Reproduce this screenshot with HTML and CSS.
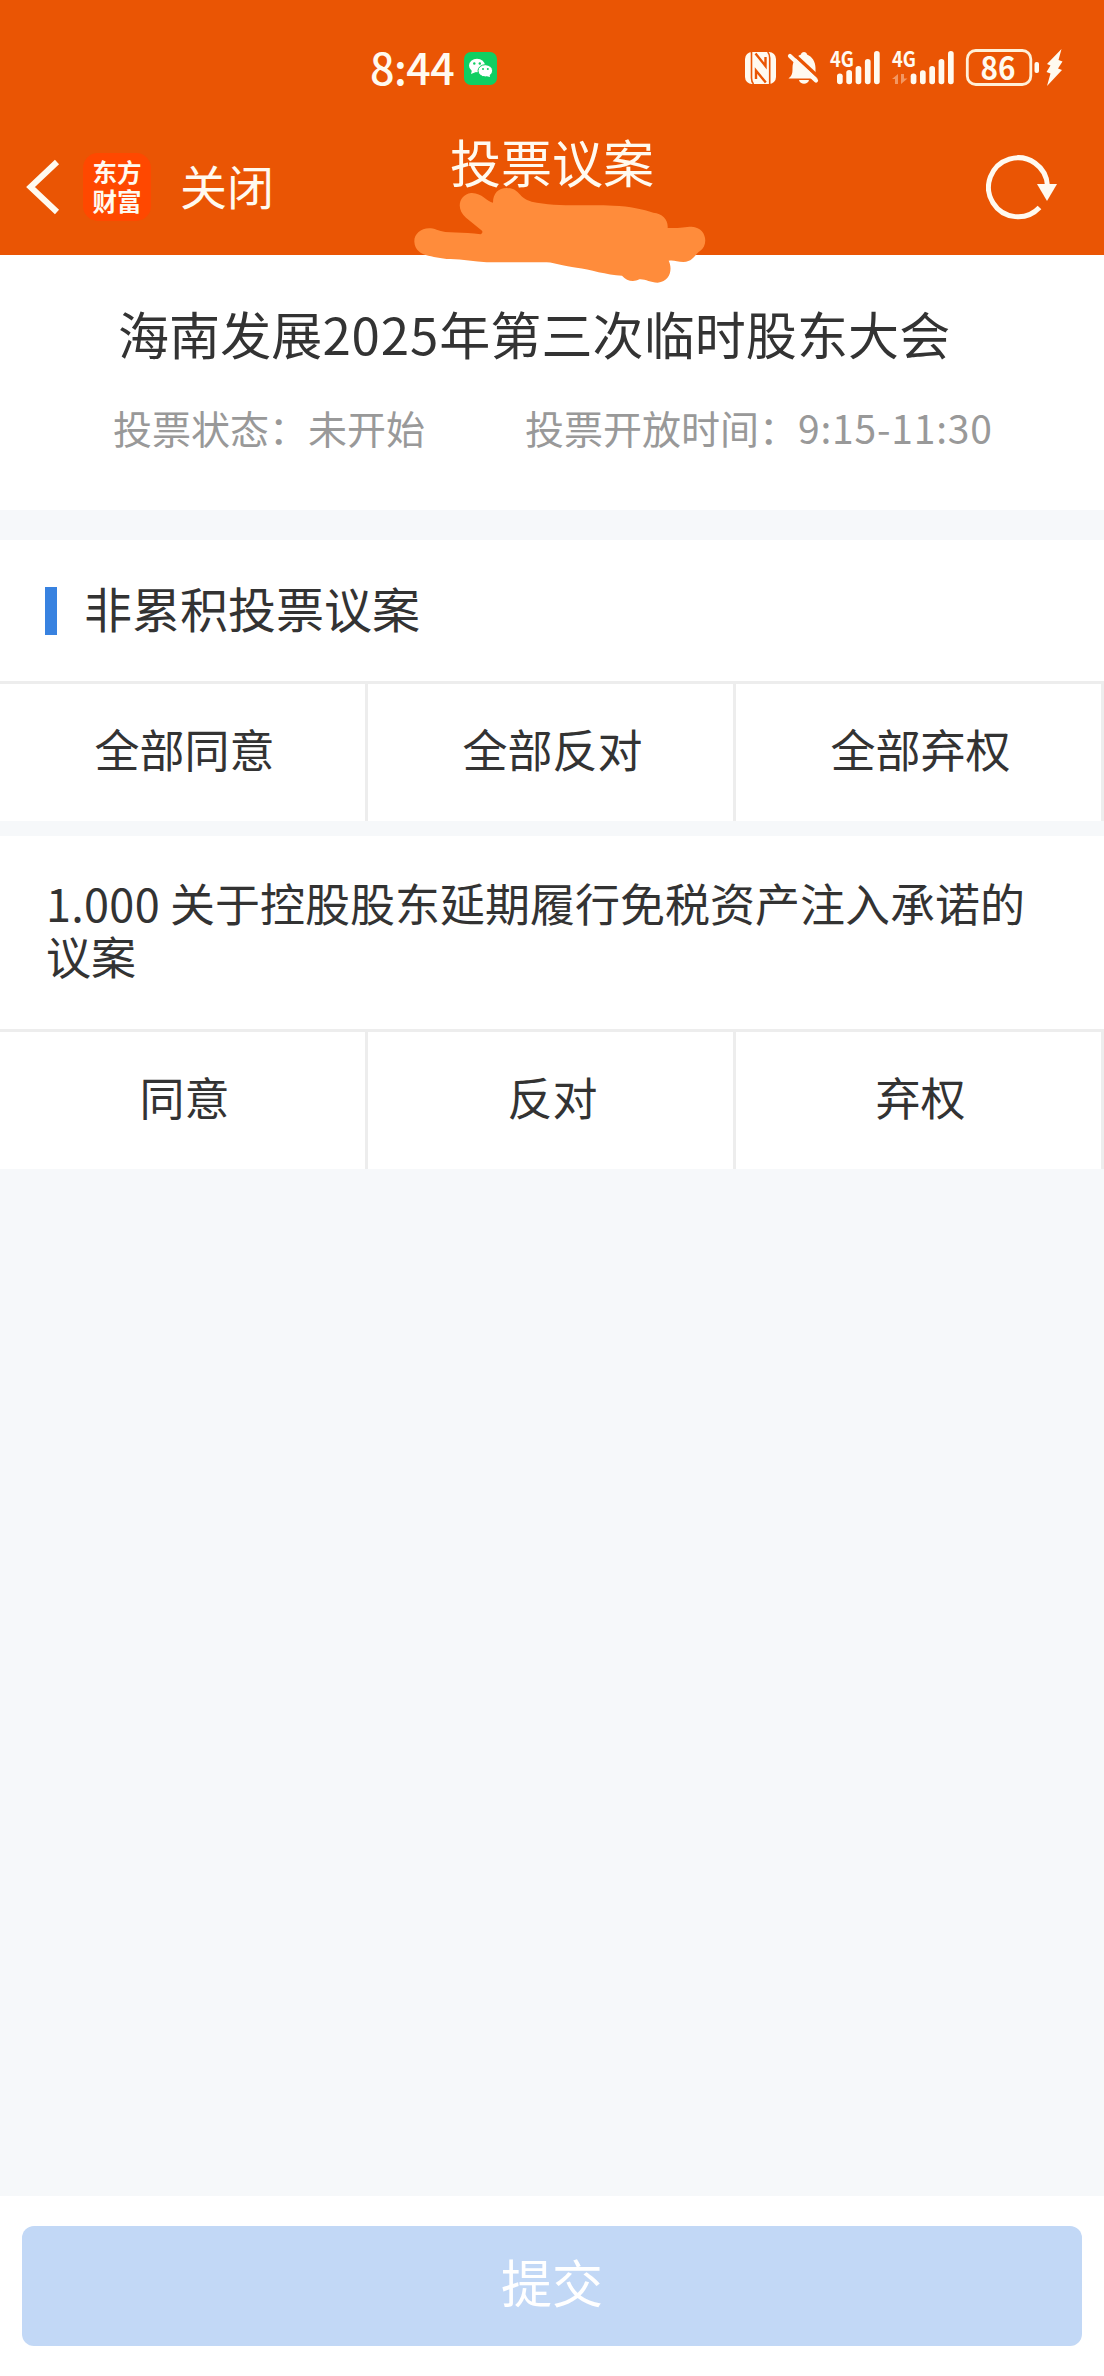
FILE: index.html
```html
<!DOCTYPE html>
<html lang="zh-CN">
<head>
<meta charset="utf-8">
<title>投票议案</title>
<link rel="stylesheet" href="styles.css">
</head>
<body>
<header class="header">
  <div class="status">
    <div class="status-left">
      <span class="time">8:44</span>
      <svg class="wechat" viewBox="0 0 33 33">
        <rect width="33" height="33" rx="7" fill="#0fcf62"/>
        <ellipse cx="13" cy="13.5" rx="8" ry="6.8" fill="#fff"/>
        <path d="M8 18l-1 4 5-2z" fill="#fff"/>
        <ellipse cx="21.3" cy="18.8" rx="7.3" ry="6.1" fill="#fff" stroke="#0fcf62" stroke-width="1"/>
        <path d="M22 24l4 1-.5-3z" fill="#fff"/>
        <g fill="#0fcf62"><circle cx="10.3" cy="11.5" r="1.2"/><circle cx="15.8" cy="11.5" r="1.2"/><circle cx="19" cy="17" r="1"/><circle cx="23.8" cy="17" r="1"/></g>
      </svg>
    </div>
    <svg class="status-right" viewBox="740 40 330 50">
      <g fill="#fffaf0">
        <rect x="745" y="52" width="31" height="32" rx="7"/>
        <path d="M751.500 52v26q0 4 2 6M769.700 84V58q0-4-2-6" fill="none" stroke="#ea5504" stroke-width="1.600"/>
        <path d="M755.500 53.500L765.500 66V57M765.800 82.500L756 70.500V79" fill="none" stroke="#ea5504" stroke-width="2.400"/>
        <path d="M788.500 78.500c4-3 4-6 4-10.500 0-7 4-12 8.500-13.500 0-3.500 6-3.500 6 0 5 2 8.500 7 8.500 13.500 0 5 0 7 2.500 10.500z"/>
        <path d="M799 80h10c-1 5-9 5-10 0z"/>
        <path d="M792 52.500l27 25" stroke="#ea5504" stroke-width="3.500"/>
        <path d="M790 56l26 24.500" stroke="#fffaf0" stroke-width="4.200" stroke-linecap="round"/>
        <text class="net" x="830" y="67" textLength="24" lengthAdjust="spacingAndGlyphs">4G</text>
        <rect x="837" y="73.500" width="5.700" height="10.800" rx="2.800"/>
        <rect x="846.300" y="70" width="5.700" height="14.300" rx="2.800"/>
        <rect x="855.600" y="66" width="5.700" height="18.300" rx="2.800"/>
        <rect x="864.900" y="59" width="5.700" height="25.300" rx="2.800"/>
        <rect x="874" y="51" width="5.700" height="33.300" rx="2.800"/>
        <text class="net" x="892" y="67" textLength="24" lengthAdjust="spacingAndGlyphs">4G</text>
        <path d="M892 79l6-5v10h-3v-5zM901 74h3v4.500h3.500l-6.500 5.500z" opacity=".4"/>
        <rect x="910.700" y="73.500" width="5.700" height="10.800" rx="2.800"/>
        <rect x="920" y="70.300" width="5.700" height="14" rx="2.800"/>
        <rect x="929.300" y="66" width="5.700" height="18.300" rx="2.800"/>
        <rect x="938.600" y="59" width="5.700" height="25.300" rx="2.800"/>
        <rect x="948" y="51" width="5.700" height="33.300" rx="2.800"/>
        <rect x="967.300" y="50.500" width="63.500" height="34" rx="8.500" fill="none" stroke="#fff0d8" stroke-width="2.800"/>
        <text class="level" x="980.500" y="79.500" textLength="35" lengthAdjust="spacingAndGlyphs">86</text>
        <rect x="1034.500" y="62" width="4.500" height="11" rx="2"/>
        <path d="M1061.500 49L1047 64l3.500 1.500L1046.500 72l4 1.500L1047 86l15-16-4-1.500 4.500-7-4-1.500z"/>
      </g>
    </svg>
  </div>
  <nav class="nav">
    <div class="nav-left">
      <svg class="back" viewBox="0 0 34 56"><path d="M31 3L4.500 28l26.500 25" fill="none" stroke="#fffaf0" stroke-width="6"/></svg>
      <div class="logo"><span>东方</span><span>财富</span></div>
      <span class="close">关闭</span>
    </div>
    <h1 class="page-title">投票议案</h1>
    <svg class="refresh" viewBox="0 0 74 66">
      <path d="M61.500 32A29.500 29.500 0 1 0 53.500 53.500" fill="none" stroke="#fffaf0" stroke-width="5"/>
      <path d="M51 30h20L61 47z" fill="#fffaf0"/>
    </svg>
  </nav>
  <svg class="scribble" viewBox="0 0 1020 510"><path fill="#ff8c3b" d="M73 365C72 335 105 315 140 329C170 342 220 334 272 343Q280 338 276 332L228 293C195 265 209 223 243 219C275 217 290 245 309 248C309 220 325 204 350 204C392 206 382 233 425 245C500 262 600 252 670 257C720 258 760 268 790 278C818 280 835 300 833 324C870 325 885 320 905 320C950 322 957 375 930 393C915 402 912 424 880 426C862 425 850 419 836 422C848 445 842 485 803 488C780 488 765 476 748 478C730 488 710 483 696 467C650 465 600 448 560 443C520 439 500 429 470 427H290C250 424 210 415 170 417C120 409 75 406 73 365Z"/></svg>
</header>

<main class="content">
  <section class="meeting">
    <h2 class="meeting-title">海南发展<span class="digits">2025</span>年第三次临时股东大会</h2>
    <div class="meeting-info">
      <span>投票状态：未开始</span>
      <span>投票开放时间：<span class="hours">9:15-11:30</span></span>
    </div>
  </section>

  <section class="card">
    <h3 class="section-title"><span>非累积投票议案</span></h3>
    <div class="options"><div>全部同意</div><div>全部反对</div><div>全部弃权</div></div>
  </section>

  <section class="card proposal">
    <p class="proposal-title"><span class="number">1.000</span> 关于控股股东延期履行免税资产注入承诺的议案</p>
    <div class="options"><div>同意</div><div>反对</div><div>弃权</div></div>
  </section>
</main>

<footer class="footer"><button class="submit">提交</button></footer>
</body>
</html>
```
FILE: styles.css
```css
* { box-sizing: border-box; }

body {
  margin: 0;
  height: 2376px;
  display: flex;
  flex-direction: column;
  background: #f6f8fa;
  color: #333;
  font-family: "Noto Sans CJK SC", sans-serif;
}

h1, h2, h3, p { margin: 0; font-weight: 400; }
svg { display: block; }

.header {
  position: relative;
  height: 255px;
  background: #ea5504;
  color: #fffaf0;
}

.status {
  display: flex;
  justify-content: space-between;
  padding: 40px 34px 0 370px;
}
.status-left { display: flex; align-items: center; gap: 10px; height: 57px; }
.time {
  width: 84px;
  padding-bottom: 5px;
  font-size: 43px;
  line-height: 52px;
  font-weight: 500;
  letter-spacing: -0.5px;
}
.wechat { width: 33px; height: 33px; }
.status-right { width: 330px; height: 50px; }
.net { font: 700 21px "Noto Sans CJK SC", sans-serif; }
.level { font: 700 32px "Noto Sans CJK SC", sans-serif; }

.nav {
  display: grid;
  grid-template-columns: 1fr auto 1fr;
  height: 120px;
  padding: 0 44px 0 26px;
  margin-top: 30px;
}
.nav-left { display: flex; align-items: center; }
.back { width: 34px; height: 56px; }
.logo {
  display: flex;
  flex-direction: column;
  justify-content: center;
  width: 68px;
  height: 68px;
  margin: 0 29px 0 23px;
  padding-bottom: 2px;
  border-radius: 15px;
  background: #ff4800;
  text-align: center;
  font-size: 24.5px;
  line-height: 29px;
  font-weight: 700;
}
.close { padding-bottom: 4px; font-size: 47px; line-height: 60px; }
.page-title { font-size: 51px; line-height: 69px; margin-right: -18px; }
.refresh { width: 74px; height: 66px; justify-self: end; align-self: center; }

.scribble {
  position: absolute;
  left: 390px;
  top: 120px;
  width: 340px;
  height: 170px;
}

.content { flex: 1; }

.meeting { height: 255px; padding: 41px 0 0 113px; background: #fff; }
.meeting-title { padding-left: 5px; font-size: 51px; line-height: 74px; letter-spacing: 0.1px; }
.digits { letter-spacing: 0.9px; }
.meeting-info {
  display: flex;
  gap: 100px;
  margin-top: 29px;
  color: #999;
  font-size: 39px;
  line-height: 56px;
  white-space: nowrap;
}
.hours { letter-spacing: 0.8px; }

.card { margin-top: 30px; background: #fff; }
.section-title {
  display: flex;
  align-items: center;
  height: 141px;
  padding-left: 45px;
  font-size: 48px;
  line-height: 60px;
}
.section-title::before {
  content: "";
  width: 12px;
  height: 48px;
  margin-right: 27px;
  background: #3882e0;
}
.section-title span { padding-bottom: 8px; }
.options {
  display: grid;
  grid-template-columns: repeat(3, 1fr);
  height: 140px;
  border-top: 3px solid #ededed;
}
.options > div {
  padding-left: 4px;
  border-right: 3px solid #ededed;
  text-align: center;
  font-size: 45px;
  line-height: 130px;
}
.proposal { margin-top: 15px; }
.proposal-title {
  height: 193px;
  padding: 40px 45px 0 46px;
  font-size: 45px;
  line-height: 53px;
}
.number { letter-spacing: 0.3px; }

.footer { height: 180px; padding: 30px 22px; background: #fff; }
.submit {
  display: block;
  width: 100%;
  height: 120px;
  padding: 0 0 10px;
  border: 0;
  border-radius: 12px;
  background: #c2d8f6;
  color: #fff;
  font: 400 51px "Noto Sans CJK SC", sans-serif;
}
```
